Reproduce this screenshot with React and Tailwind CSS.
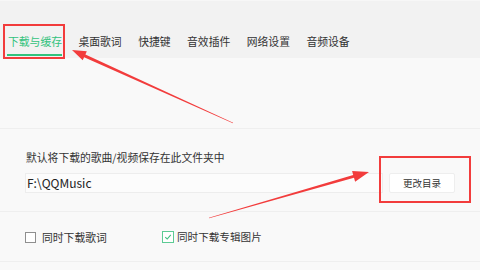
import React from "react";

const tabs = ["下载与缓存", "桌面歌词", "快捷键", "音效插件", "网络设置", "音频设备"];

export default function App() {
  return (
    <div
      className="relative w-[480px] h-[270px] overflow-hidden bg-[#f9f9f9] text-[#333]"
      style={{ fontFamily: '"Noto Sans CJK SC", "Noto Sans", sans-serif' }}
    >
      {/* tab bar */}
      <div className="h-[58px] bg-[#f2f2f2] border-t border-[#f7f7f7] flex items-end pl-[8px] gap-[16.5px]">
        {tabs.map((t, i) => (
          <div
            key={t}
            className={
              "relative h-[34px] flex items-center text-[10.8px] leading-none " +
              (i === 0 ? "text-[#31c27c]" : "text-[#333]")
            }
          >
            {t}
            {i === 0 && (
              <div className="absolute left-[-1px] right-0 bottom-[2px] h-[2px] bg-[#31c27c]" />
            )}
          </div>
        ))}
      </div>

      {/* empty section */}
      <div className="h-[71px] border-b border-[#efefef]" />

      {/* folder section */}
      <div className="px-[25px] pt-[21px] pb-[18px] border-b border-[#efefef]">
        <div className="pl-[1px] text-[10.8px] leading-[14px] text-[#333]">默认将下载的歌曲/视频保存在此文件夹中</div>
        <div className="mt-[9px] flex items-center gap-[6px]">
          <div className="w-[364px] h-[20px] bg-[#fcfcfc] border border-[#ededed] flex items-center pl-[1px] text-[12px] text-[#222]">
            F:\QQMusic
          </div>
          <div className="w-[67px] h-[20px] bg-white border border-[#eeeeee] rounded-[2px] flex items-center justify-center text-[9.5px] text-[#333]">
            更改目录
          </div>
        </div>
      </div>

      {/* checkbox section */}
      <div className="px-[25px] pt-[19px] pb-[18px] border-b border-[#efefef] flex items-center">
        <div className="flex items-center gap-[6px] w-[137px]">
          <div className="w-[11px] h-[11px] border border-[#8f8f8f] bg-white" />
          <span className="text-[10.8px] leading-[12px] text-[#333]">同时下载歌词</span>
        </div>
        <div className="flex items-center gap-[3px]">
          <div className="w-[12px] h-[12px] border-[1.5px] border-[#5ccb94] bg-white flex items-center justify-center">
            <svg width="8" height="8" viewBox="0 0 8 8">
              <path d="M1.2 4.2 L3.2 6 L6.8 1.8" fill="none" stroke="#3fbf80" strokeWidth="1.1" />
            </svg>
          </div>
          <span className="text-[10.6px] leading-[12px] text-[#333]">同时下载专辑图片</span>
        </div>
      </div>

      {/* annotation boxes */}
      <div className="absolute left-[3px] top-[24px] w-[62px] h-[35px] border-2 border-[#f23c3c]" />
      <div className="absolute left-[379px] top-[156px] w-[92px] h-[47px] border-2 border-[#f23c3c]" />

      {/* arrows */}
      <svg className="absolute inset-0 pointer-events-none" width="480" height="270" viewBox="0 0 480 270">
        <polygon
          fill="#f23c3c"
          points="72,50 86.8,51.2 85.4,54.4 233.1,122.7 232.9,123.3 84.1,57.2 82.7,60.3"
        />
        <polygon
          fill="#f23c3c"
          points="369,172 355.1,181.7 354.0,177.8 209.1,218.3 208.9,217.7 353.2,175.0 352.1,171.1"
        />
      </svg>
    </div>
  );
}
